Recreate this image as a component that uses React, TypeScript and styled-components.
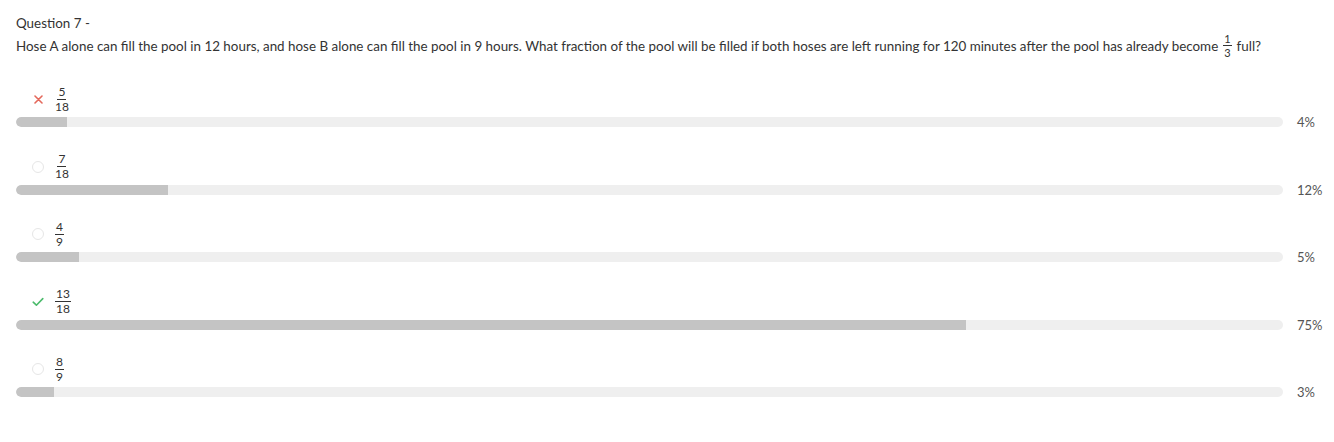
import React from 'react';
import styled, { createGlobalStyle } from 'styled-components';

const GlobalStyle = createGlobalStyle`
  html, body {
    margin: 0;
    padding: 0;
    background: #fff;
  }
  body {
    font-family: Lato, "Open Sans", sans-serif;
    color: #333;
  }
`;

const Page = styled.div`
  padding: 15px 16px 0 16px;
`;

const Title = styled.div`
  font-size: 13.4px;
  line-height: 16px;
  color: #333;
`;

const Prompt = styled.div`
  margin-top: 2px;
  font-size: 13.4px;
  line-height: 16px;
  color: #333;
  display: flex;
  align-items: center;
  white-space: nowrap;
`;

const Frac = styled.span<{ size?: number }>`
  display: inline-flex;
  flex-direction: column;
  align-items: center;
  margin: 0 5px;
  font-size: ${(p) => p.size ?? 12}px;
  line-height: 1;
  color: #333;
`;

const Num = styled.span`
  padding: 0 1px 1px;
  border-bottom: 1px solid #333;
`;

const Den = styled.span`
  padding-top: 1px;
`;

const Options = styled.div`
  margin-top: 27px;
  display: flex;
  flex-direction: column;
  gap: 25.5px;
`;

const Option = styled.div`
  display: flex;
  flex-direction: column;
  gap: 4px;
`;

const Label = styled.div`
  display: flex;
  align-items: center;
  padding-left: 16px;
  gap: 6px;
  height: 28px;
`;

const Mark = styled.span`
  width: 12px;
  height: 12px;
  display: flex;
  align-items: center;
  justify-content: center;
`;

const Radio = styled.span`
  width: 10px;
  height: 10px;
  border-radius: 50%;
  border: 1px solid #e6e6e6;
`;

const BarRow = styled.div`
  display: flex;
  align-items: center;
  height: 10px;
`;

const Track = styled.div`
  flex: 0 0 1267px;
  height: 10px;
  border-radius: 5px;
  background: #efefef;
  overflow: hidden;
`;

const Fill = styled.div`
  height: 100%;
  background: #c4c4c4;
  border-radius: 5px 0 0 5px;
`;

const Pct = styled.span`
  margin-left: 14px;
  font-size: 13px;
  line-height: 10px;
  color: #555;
  white-space: nowrap;
`;

type Status = 'wrong' | 'right' | 'none';

const options: { num: string; den: string; pct: number; status: Status }[] = [
  { num: '5', den: '18', pct: 4, status: 'wrong' },
  { num: '7', den: '18', pct: 12, status: 'none' },
  { num: '4', den: '9', pct: 5, status: 'none' },
  { num: '13', den: '18', pct: 75, status: 'right' },
  { num: '8', den: '9', pct: 3, status: 'none' },
];

const StatusIcon: React.FC<{ status: Status }> = ({ status }) => {
  if (status === 'wrong') {
    return (
      <Mark>
        <svg width="9" height="9" viewBox="0 0 9 9">
          <path d="M1 1 L8 8 M8 1 L1 8" stroke="#e4695c" strokeWidth="1.6" strokeLinecap="round" />
        </svg>
      </Mark>
    );
  }
  if (status === 'right') {
    return (
      <Mark>
        <svg width="12" height="10" viewBox="0 0 12 10">
          <path d="M1.2 5.2 L4.4 8.2 L10.8 1.6" stroke="#4cbb6c" strokeWidth="1.6" fill="none" strokeLinecap="round" strokeLinejoin="round" />
        </svg>
      </Mark>
    );
  }
  return (
    <Mark>
      <Radio />
    </Mark>
  );
};

const App: React.FC = () => {
  return (
    <Page>
      <GlobalStyle />
      <Title>Question 7 -</Title>
      <Prompt>
        Hose A alone can fill the pool in 12 hours, and hose B alone can fill the pool in 9 hours. What fraction of the pool will be filled if both hoses are left running for 120 minutes after the pool has already become
        <Frac size={11}>
          <Num>1</Num>
          <Den>3</Den>
        </Frac>
        full?
      </Prompt>
      <Options>
        {options.map((o) => (
          <Option key={o.num + o.den}>
            <Label>
              <StatusIcon status={o.status} />
              <Frac>
                <Num>{o.num}</Num>
                <Den>{o.den}</Den>
              </Frac>
            </Label>
            <BarRow>
              <Track>
                <Fill style={{ width: `${o.pct}%` }} />
              </Track>
              <Pct>{o.pct}%</Pct>
            </BarRow>
          </Option>
        ))}
      </Options>
    </Page>
  );
};

export default App;
